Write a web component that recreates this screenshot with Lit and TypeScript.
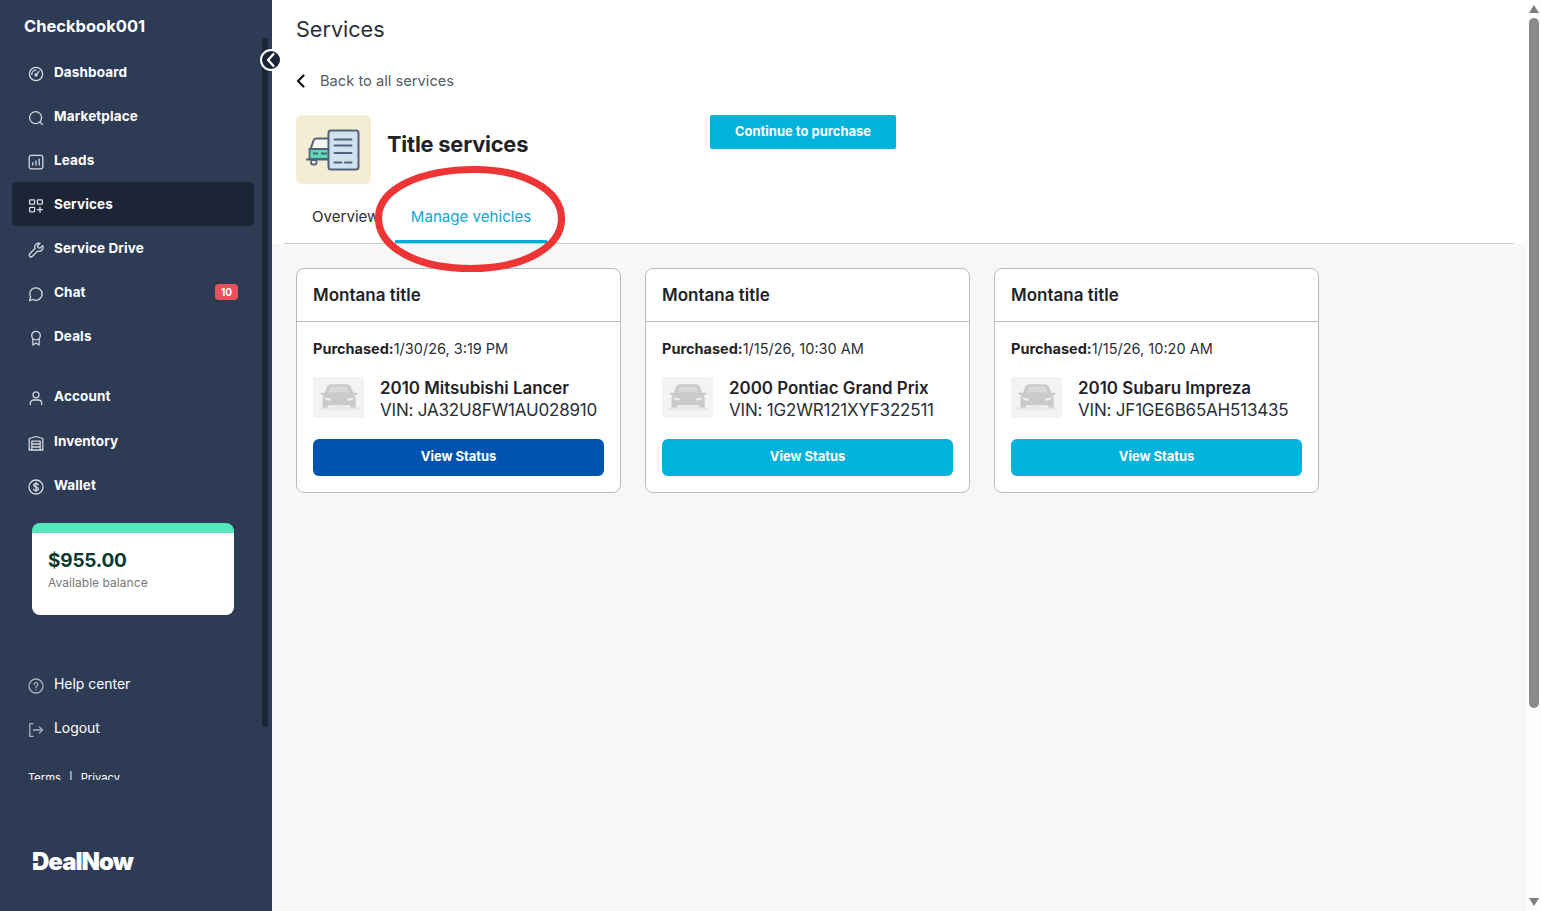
import { LitElement, html, css, svg } from "lit";
import { customElement } from "lit/decorators.js";

const ic = (body: unknown) => html`<svg class="ic" viewBox="0 0 16 16" fill="none" stroke="currentColor" stroke-width="1.300" stroke-linecap="round" stroke-linejoin="round">${body}</svg>`;

const icons: Record<string, unknown> = {
  dashboard: ic(svg`<circle cx="8" cy="8" r="6.600"/><path d="M8 9.200 11 5.400M3.800 8.400A4.200 4.200 0 0 1 8 4.200"/><circle cx="8" cy="9" r="1"/>`),
  marketplace: ic(svg`<circle cx="7.600" cy="7.600" r="6"/><path d="m12 12 2.600 2.600"/>`),
  leads: ic(svg`<rect x="1.200" y="1.400" width="13.600" height="13.400" rx="2"/><path d="M4.800 11V8.600M8 11V7M11.200 11V5.200"/>`),
  services: ic(svg`<rect x="1.600" y="1.800" width="5" height="4.400" rx=".8"/><rect x="9.400" y="1.800" width="5" height="4.400" rx=".8"/><rect x="1.600" y="9.400" width="5" height="4.400" rx=".8"/><path d="M12 9.200v5M9.400 11.700h5"/>`),
  drive: ic(svg`<path d="M14.600 3.600 12 6.100l-2-.4-.5-2L12 1.300a4 4 0 0 0-5 5.200L1.800 11.700a1.800 1.800 0 0 0 2.600 2.600L9.600 9.100a4 4 0 0 0 5-5.500Z"/>`),
  chat: ic(svg`<path d="M2.600 11.200A6.200 6.200 0 1 1 5 13.500L1.500 14.600Z"/>`),
  deals: ic(svg`<circle cx="8" cy="5.600" r="4.300"/><path d="M4.900 9v6l3.100-2 3.100 2V9"/>`),
  account: ic(svg`<circle cx="8" cy="4.800" r="3"/><path d="M2.300 14.500v-1.300a3.200 3.200 0 0 1 3.200-3.200h5a3.200 3.200 0 0 1 3.200 3.200v1.300"/>`),
  inventory: ic(svg`<path d="M1.200 15V3.500L8 1.500l6.800 2V15ZM3.800 15V6.200h8.400V15M3.800 9h8.400M3.800 12h8.400"/>`),
  wallet: ic(svg`<circle cx="8" cy="8" r="7"/><path d="M10.300 5.700C9.800 4.900 9 4.600 8 4.600c-1.300 0-2.300.7-2.300 1.700 0 2.300 4.700 1.200 4.700 3.500 0 1-1 1.700-2.400 1.700-1 0-1.900-.4-2.400-1.200M8 3.400v9.200"/>`),
  help: ic(svg`<circle cx="8" cy="8" r="7"/><path d="M6.100 6.300A1.900 1.900 0 1 1 8 8.400v1"/><path d="M8 11.500v.1"/>`),
  logout: ic(svg`<path d="M5 1.600H1.800v12.800H5M5.500 8h9M11.400 4.900 14.500 8l-3.100 3.100"/>`),
};

type Item = { key: string; label: string; cls?: string; badge?: string };
const main: Item[] = [
  { key: "dashboard", label: "Dashboard" },
  { key: "marketplace", label: "Marketplace" },
  { key: "leads", label: "Leads" },
  { key: "services", label: "Services", cls: "active" },
  { key: "drive", label: "Service Drive" },
  { key: "chat", label: "Chat", badge: "10" },
  { key: "deals", label: "Deals" },
];

const cards = [
  { date: "1/30/26, 3:19 PM", car: "2010 Mitsubishi Lancer", vin: "JA32U8FW1AU028910", dark: true },
  { date: "1/15/26, 10:30 AM", car: "2000 Pontiac Grand Prix", vin: "1G2WR121XYF322511", dark: false },
  { date: "1/15/26, 10:20 AM", car: "2010 Subaru Impreza", vin: "JF1GE6B65AH513435", dark: false },
];

@customElement("app-root")
export class AppRoot extends LitElement {
  static styles = css`
    :host { display: block; height: 911px; overflow: hidden; font-family: "Inter", "Liberation Sans", sans-serif; color: #1f2328; }
    * { box-sizing: border-box; }
    .page { display: flex; height: 911px; position: relative; }

    .side { width: 272px; flex: none; background: #2e3b54; color: #fff; display: flex; flex-direction: column; }
    .brand { height: 38px; padding: 15px 0 0 24px; font-size: 16.500px; line-height: 22px; font-weight: 700; letter-spacing: 0; }
    .navwrap { display: flex; height: 742px; align-items: flex-start; }
    .nav { width: 262px; height: 742px; overflow: hidden; padding: 12px 8px 0 12px; flex: none; }
    .thumb { width: 6px; height: 689px; background: #1c2536; border-radius: 3px; flex: none; }
    .item { height: 44px; display: flex; align-items: center; padding: 0 16px; border-radius: 4px; font-size: 13.500px; font-weight: 700; letter-spacing: .12px; color: #fff; }
    .item .lbl { margin-left: 10px; flex: 1; }
    .item .ic { width: 16px; height: 16px; color: #d5d9e0; flex: none; transform: translateY(2px); }
    .item.active { background: #1c2536; }
    .item.light { font-weight: 400; font-size: 14px; letter-spacing: -.05px; padding-bottom: 2px; }
    .item.light .ic { transform: translateY(3px); color: #aab1be; }
    .badge { width: 23px; height: 16px; border-radius: 4px; background: #e8505b; font-size: 10px; line-height: 16px; text-align: center; font-weight: 700; color: #fff; letter-spacing: 0; }
    .mt16 { margin-top: 16px; }
    .mt1 { margin-top: 1px; }
    .mt47 { margin-top: 47px; }
    .balance { margin: 16px 0 0 20px; width: 202px; height: 92px; background: #fff; border-radius: 8px; border-top: 10px solid #55e6bb; padding: 16px 16px 0; }
    .amount { font-size: 19px; line-height: 24px; font-weight: 700; letter-spacing: -.2px; color: #0c3a30; }
    .avail { font-size: 12px; line-height: 20px; color: #777; letter-spacing: .05px; }
    .terms { margin: 21px 0 0 16px; font-size: 11.200px; line-height: 14px; color: #fff; display: flex; gap: 8px; }
    .logo { position: relative; margin: 67px 0 0 32px; font-size: 24px; line-height: 30px; font-weight: 900; letter-spacing: -1px; }
    .logo::before { content: ""; position: absolute; left: -1px; top: 14px; width: 7px; height: 2px; background: #2e3b54; transform: skewX(-30deg); }

    .toggle { position: absolute; left: 260px; top: 49px; width: 22px; height: 22px; border-radius: 50%; background: #1c2536; border: 2px solid #fff; color: #fff; display: flex; align-items: center; justify-content: center; }
    .toggle svg { width: 14px; height: 14px; }

    .content { flex: 1; min-width: 0; background: #f7f7f7; display: flex; flex-direction: column; }
    .head { background: #fff; height: 244px; padding: 0 12px; }
    .headin { height: 244px; border-bottom: 1px solid #ccc; padding: 0 12px; }
    h1 { margin: 0; padding-top: 14px; font-size: 21.600px; line-height: 30px; font-weight: 400; color: #2a2f36; }
    .back { display: flex; align-items: center; margin-top: 22px; height: 30px; font-size: 14.700px; color: #555b63; }
    .back svg { width: 10px; height: 14px; color: #111; margin-right: 14px; flex: none; }
    .titlerow { display: grid; grid-template-columns: 414px auto; margin-top: 19px; height: 69px; align-items: start; }
    .tleft { display: flex; align-items: center; height: 69px; }
    .tile { width: 75px; height: 69px; background: #f3edd3; border-radius: 6px; display: flex; align-items: center; justify-content: center; }
    .tile svg { width: 56px; height: 48px; }
    h2 { margin: 0 0 0 16px; font-size: 21.800px; font-weight: 700; letter-spacing: -.2px; color: #1f2328; transform: translateY(-6px); }
    .buy { width: 186px; height: 34px; background: #00b2dc; color: #fff; border-radius: 2px; border: 0; font: 700 13px "Inter", sans-serif; letter-spacing: 0; padding: 0 0 2px; display: block; }
    .tabs { display: flex; margin-top: 16px; height: 43px; font-size: 15.100px; line-height: 33px; padding-left: 16px; }
    .tab { color: #2a2f36; width: 83px; white-space: nowrap; }
    .tab.on { color: #12a6cf; width: 152px; border-bottom: 3px solid #00acd7; text-align: center; }

    .cards { display: flex; gap: 24px; padding: 24px 0 0 24px; }
    .card { width: 325px; height: 225px; background: #fff; border: 1px solid #bbb; border-radius: 8px; overflow: hidden; }
    .ctitle { height: 53px; border-bottom: 1px solid #bbb; padding: 0 16px; font-size: 17px; font-weight: 600; line-height: 53px; color: #1f2328; }
    .cbody { padding: 16px 16px 0; }
    .pur { font-size: 14.500px; line-height: 22px; color: #2a2f36; }
    .pur b { font-weight: 700; color: #1f2328; }
    .veh { display: flex; margin-top: 17px; height: 41px; }
    .thumbcar { width: 51px; height: 41px; background: #f3f3f3; border-radius: 3px; flex: none; display: flex; align-items: center; justify-content: center; }
    .thumbcar svg { width: 44px; height: 31px; }
    .vtext { margin-left: 16px; }
    .car { font-size: 16.900px; font-weight: 600; line-height: 23px; color: #1f2328; }
    .vin { font-size: 17px; line-height: 21px; color: #2a2f36; white-space: nowrap; letter-spacing: -.2px; }
    .view { display: block; width: 291px; height: 37px; margin-top: 21px; border: 0; border-radius: 6px; padding: 0 0 3px; background: #00b2dc; color: #fff; font: 700 13px "Inter", sans-serif; letter-spacing: -.05px; }
    .view.dark { background: #0054b0; }

    .sb { width: 15px; flex: none; background: #fdfdfd; display: flex; flex-direction: column; align-items: center; height: 911px; }
    .arrow { height: 18px; flex: none; display: flex; align-items: center; justify-content: center; }
    .arrow svg { width: 10px; height: 8px; fill: #7d7d7d; }
    .bar { width: 10px; height: 690px; background: #8a8a8a; border-radius: 5px; flex: none; }
    .sbgap { flex: 1; }

    .ring { position: absolute; left: 370px; top: 160px; width: 200px; height: 118px; pointer-events: none; }
  `;

  private car() {
    return html`<svg viewBox="0 0 40 28"><ellipse cx="20" cy="24" rx="19" ry="2" fill="#e8e8e8"/><path fill="#cacaca" d="M9 4.500C10 2.500 12 2 14 2h12c2 0 4 .5 5 2.500l2 5.500 3-.5c.8 0 1 1.500 0 2l-2 .6c1 1 1.200 2.400 1.200 4V23h-5v-2H10v2H5v-6.900c0-1.600.2-3 1.200-4l-2-.6c-1-.5-.8-2 0-2l3 .5Z"/><path fill="#d8d8d8" d="M10.500 10 12 5c.3-.8 1-1 2-1h12c1 0 1.700.2 2 1l1.500 5c-6-1.200-13-1.200-19 0Z"/><path fill="#eee" d="M7.500 14l5 1v2l-5-1ZM32.500 14l-5 1v2l5-1Z"/></svg>`;
  }

  private row(i: Item, extra = "") {
    return html`<div class="item ${i.cls ?? ""} ${extra}">${icons[i.key]}<span class="lbl">${i.label}</span>${i.badge ? html`<span class="badge">${i.badge}</span>` : ""}</div>`;
  }

  render() {
    return html`<div class="page">
      <aside class="side">
        <div class="brand">Checkbook001</div>
        <div class="navwrap">
          <nav class="nav">
            ${main.map((i) => this.row(i))}
            ${this.row({ key: "account", label: "Account" }, "mt16")}
            ${this.row({ key: "inventory", label: "Inventory" }, "mt1")}
            ${this.row({ key: "wallet", label: "Wallet" })}
            <div class="balance">
              <div class="amount">$955.00</div>
              <div class="avail">Available balance</div>
            </div>
            ${this.row({ key: "help", label: "Help center" }, "mt47 light")}
            ${this.row({ key: "logout", label: "Logout" }, "light")}
            <div class="terms"><span>Terms</span><span>|</span><span>Privacy</span></div>
          </nav>
          <div class="thumb"></div>
        </div>
        <div class="logo">DealNow</div>
      </aside>

      <main class="content">
        <div class="head"><div class="headin">
          <h1>Services</h1>
          <div class="back">
            <svg viewBox="0 0 10 14" fill="none" stroke="currentColor" stroke-width="2.200" stroke-linecap="round" stroke-linejoin="round"><path d="M7.500 1.500 2 7l5.500 5.500"/></svg>
            Back to all services
          </div>
          <div class="titlerow">
            <div class="tleft">
              <div class="tile">
                <svg viewBox="0 0 56 48">
                  <path d="M5 22l2.500-7.500c.4-1.200 1.400-2 2.800-2H24V33H4V24Z" fill="#f6f6f0" stroke="#55607a" stroke-width="2" stroke-linejoin="round"/>
                  <path d="M3.500 23H24v10H3.500Z" fill="#55dcb0" stroke="#55607a" stroke-width="1.800"/>
                  <path d="M7 27.500h5M15 27.500h6" stroke="#55607a" stroke-width="1.800"/>
                  <path d="M.8 33.500H23" stroke="#55607a" stroke-width="2.200" stroke-linecap="round"/>
                  <rect x="5" y="34" width="5.500" height="4.500" rx="1.800" fill="#f6f6f0" stroke="#55607a" stroke-width="1.800"/>
                  <rect x="22.500" y="4.500" width="30" height="39" rx="2.500" fill="#cfe2ee" stroke="#55607a" stroke-width="2"/>
                  <path d="M28.500 13.500h17M28.500 19.500h17M28.500 27h17M28.500 36.500h7M39 36.500h6.500" stroke="#55607a" stroke-width="2" stroke-linecap="round"/>
                </svg>
              </div>
              <h2>Title services</h2>
            </div>
            <button class="buy">Continue to purchase</button>
          </div>
          <div class="tabs">
            <div class="tab">Overview</div>
            <div class="tab on">Manage vehicles</div>
          </div>
        </div></div>

        <div class="cards">
          ${cards.map((c) => html`<section class="card">
            <div class="ctitle">Montana title</div>
            <div class="cbody">
              <div class="pur"><b>Purchased:</b>${c.date}</div>
              <div class="veh">
                <div class="thumbcar">${this.car()}</div>
                <div class="vtext">
                  <div class="car">${c.car}</div>
                  <div class="vin">VIN: ${c.vin}</div>
                </div>
              </div>
              <button class="view ${c.dark ? "dark" : ""}">View Status</button>
            </div>
          </section>`)}
        </div>
      </main>

      <div class="sb">
        <div class="arrow"><svg viewBox="0 0 10 8"><path d="M5 0 10 8H0Z"/></svg></div>
        <div class="bar"></div>
        <div class="sbgap"></div>
        <div class="arrow"><svg viewBox="0 0 10 8"><path d="M0 0h10L5 8Z"/></svg></div>
      </div>

      <div class="toggle"><svg viewBox="0 0 12 12" fill="none" stroke="currentColor" stroke-width="2" stroke-linecap="round" stroke-linejoin="round"><path d="M8 1 3.500 6 8 11"/></svg></div>
      <svg class="ring" viewBox="0 0 200 118" fill="none"><path d="M8.500 58C8.500 28 52 9.500 105 9.500c48 0 86.500 20 86.500 49.500 0 28-38 49.500-90 49.500C48 108.500 8.500 88 8.500 58Z" stroke="#ee3535" stroke-width="7.200"/></svg>
    </div>`;
  }
}
